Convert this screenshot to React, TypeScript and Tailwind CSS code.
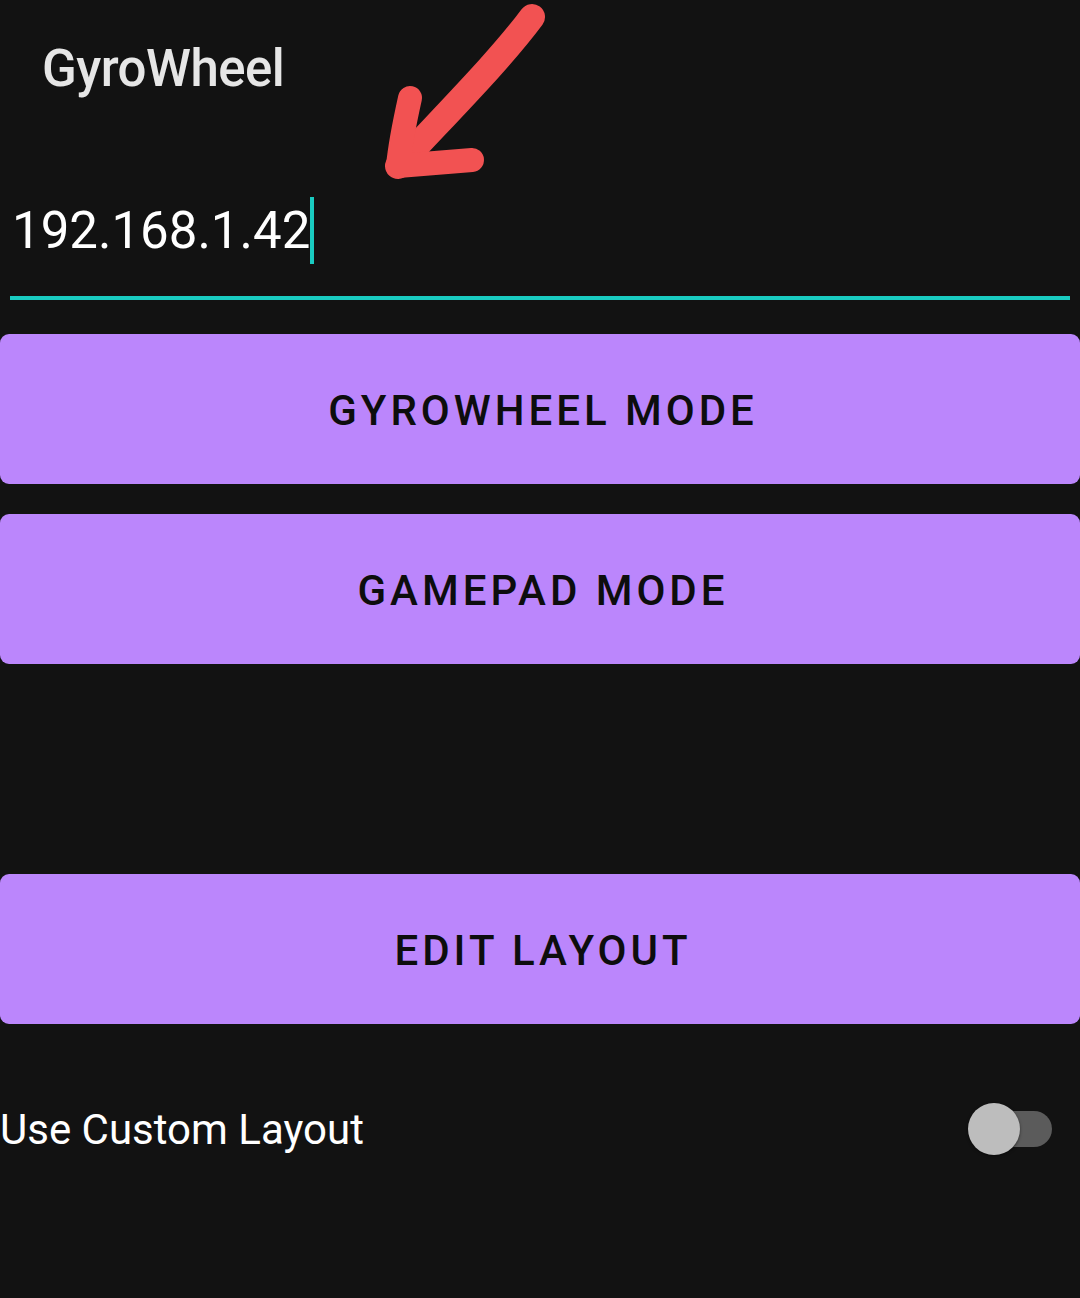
import React from "react";

export default function App() {
  return (
    <div className="relative w-[1080px] h-[1298px] bg-[#121212] overflow-hidden" style={{ fontFamily: "Roboto, 'Noto Sans', sans-serif" }}>
      <div className="h-[140px] pl-[42px] pt-[37px]">
        <div className="text-[51px] leading-[64px] font-medium text-[#e6e6e6] tracking-[-0.01em]">GyroWheel</div>
      </div>
      <svg className="absolute left-0 top-0" width="600" height="200" viewBox="0 0 600 200">
        <path d="M532 17 C 500 60, 450 110, 398 166" stroke="#f25252" strokeWidth="26" strokeLinecap="round" fill="none" />
        <path d="M410 98 C 404 125, 400 145, 398 166 L 472 160" stroke="#f25252" strokeWidth="24" strokeLinecap="round" strokeLinejoin="round" fill="none" />
      </svg>
      <div className="px-[10px]">
        <div className="flex items-center h-[160px] border-b-[4px] border-[#19cbc1] pt-[30px] pb-[6px]">
          <span className="text-[51px] text-white pl-[2px] leading-none">192.168.1.42</span>
          <span className="w-[4px] h-[67px] bg-[#19cbc1]" />
        </div>
      </div>
      <div className="flex flex-col mt-[34px]">
        <button className="h-[150px] w-[1080px] rounded-[9px] bg-[#bb86fc] text-[#0d0d0d] text-[42px] font-medium tracking-[0.095em] pt-[2px] pl-[6px]">GYROWHEEL MODE</button>
        <button className="mt-[30px] h-[150px] w-[1080px] rounded-[9px] bg-[#bb86fc] text-[#0d0d0d] text-[42px] font-medium tracking-[0.095em] pt-[2px] pl-[6px]">GAMEPAD MODE</button>
        <button className="mt-[210px] h-[150px] w-[1080px] rounded-[9px] bg-[#bb86fc] text-[#0d0d0d] text-[42px] font-medium tracking-[0.095em] pt-[2px] pl-[6px]">EDIT LAYOUT</button>
      </div>
      <div className="flex items-center justify-between h-[70px] mt-[70px] pr-[28px]">
        <span className="text-[42px] text-white">Use Custom Layout</span>
        <div className="relative w-[84px] h-[52px] flex items-center">
          <div className="absolute left-[12px] right-0 h-[36px] rounded-full bg-[#5b5b5b]" />
          <div className="absolute left-0 w-[52px] h-[52px] rounded-full bg-[#bdbdbd] shadow-[0_1px_3px_rgba(0,0,0,0.5)]" />
        </div>
      </div>
    </div>
  );
}
